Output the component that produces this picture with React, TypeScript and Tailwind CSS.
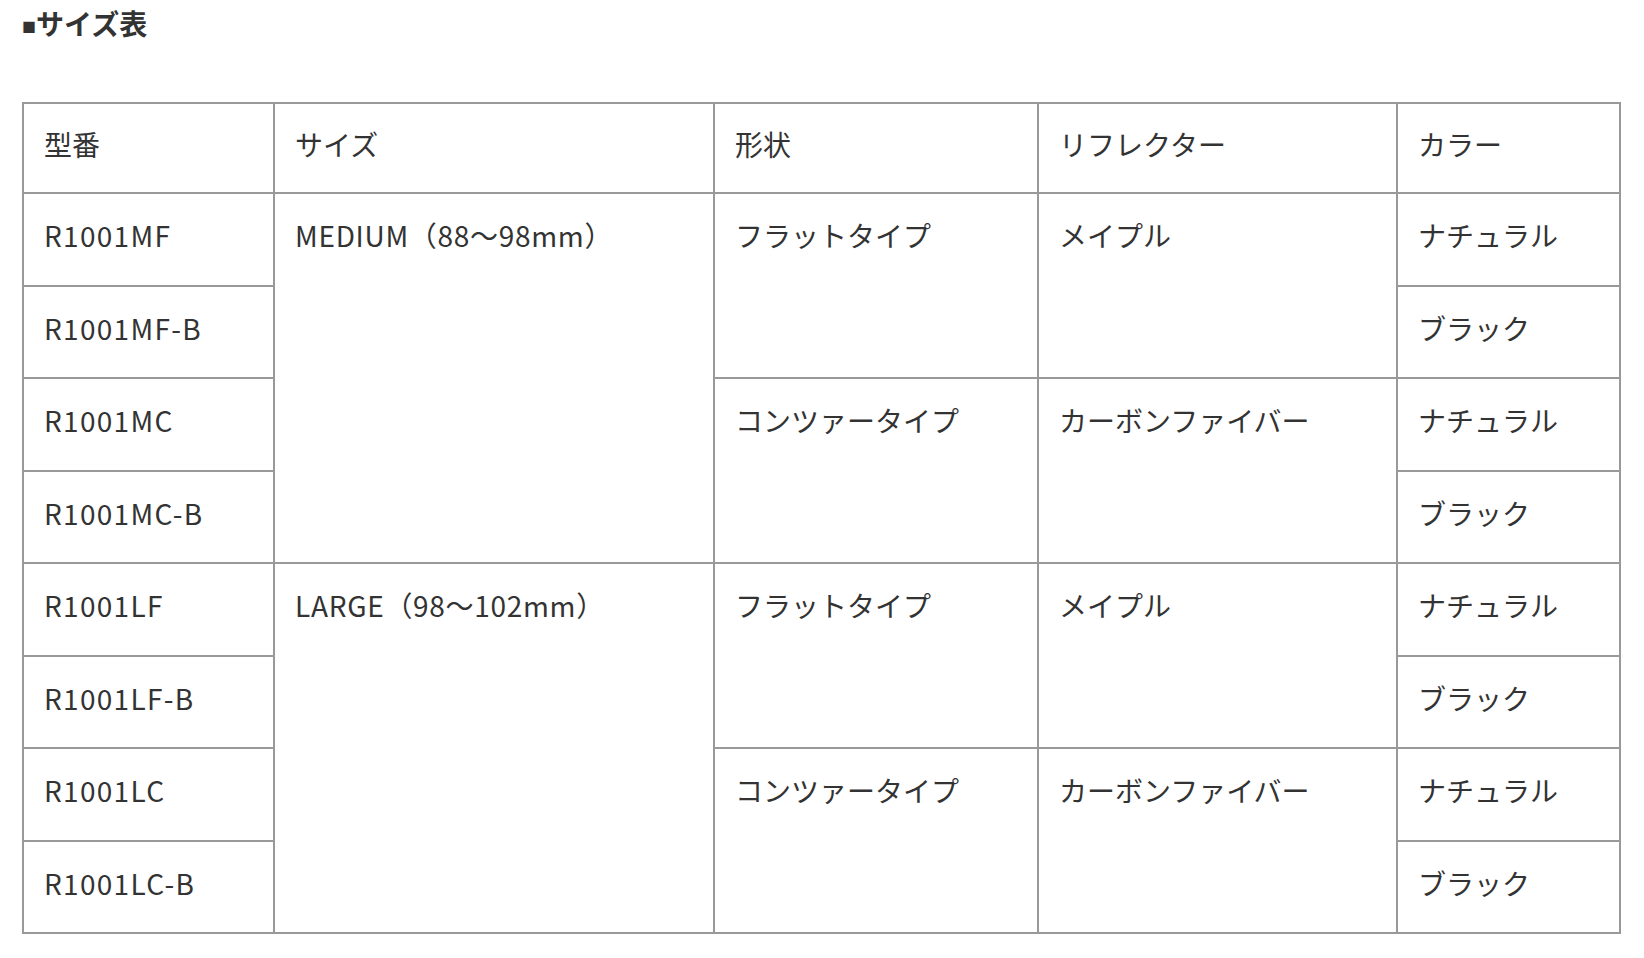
const rows = [
  { model: 'R1001MF', size: 'MEDIUM（88〜98mm）', shape: 'フラットタイプ', reflector: 'メイプル', color: 'ナチュラル' },
  { model: 'R1001MF-B', color: 'ブラック' },
  { model: 'R1001MC', shape: 'コンツァータイプ', reflector: 'カーボンファイバー', color: 'ナチュラル' },
  { model: 'R1001MC-B', color: 'ブラック' },
  { model: 'R1001LF', size: 'LARGE（98〜102mm）', shape: 'フラットタイプ', reflector: 'メイプル', color: 'ナチュラル' },
  { model: 'R1001LF-B', color: 'ブラック' },
  { model: 'R1001LC', shape: 'コンツァータイプ', reflector: 'カーボンファイバー', color: 'ナチュラル' },
  { model: 'R1001LC-B', color: 'ブラック' },
];

const base = 'border-2 border-[#999999] px-[20px] leading-[50px] align-top text-left font-normal';
const head = `${base} pt-[15px] pb-[23px]`;
const cell = `${base} pt-[16px] pb-[24.5px]`;

export default function App() {
  return (
    <main
      className="min-h-screen bg-white px-[22px] pt-[5px] text-[#333333]"
      style={{ fontFamily: '"Noto Sans CJK JP", "Noto Sans", sans-serif' }}
    >
      <h2 className="text-[28px] font-bold leading-[36px]">
        <span className="text-[14px] leading-[0] align-[3px]">■</span>サイズ表
      </h2>
      <table className="mt-[61px] w-[1597px] table-fixed border-collapse text-[28px]">
        <colgroup>
          <col className="w-[251px]" />
          <col className="w-[440px]" />
          <col className="w-[324px]" />
          <col className="w-[359px]" />
          <col className="w-[223px]" />
        </colgroup>
        <thead>
          <tr>
            <th className={head}>型番</th>
            <th className={head}>サイズ</th>
            <th className={head}>形状</th>
            <th className={head}>リフレクター</th>
            <th className={head}>カラー</th>
          </tr>
        </thead>
        <tbody>
          {rows.map((r) => (
            <tr key={r.model}>
              <td className={`${cell} tracking-[1.3px]`}>{r.model}</td>
              {r.size && <td className={`${cell} tracking-[0.7px]`} rowSpan={4}>{r.size}</td>}
              {r.shape && <td className={cell} rowSpan={2}>{r.shape}</td>}
              {r.reflector && <td className={cell} rowSpan={2}>{r.reflector}</td>}
              <td className={cell}>{r.color}</td>
            </tr>
          ))}
        </tbody>
      </table>
    </main>
  );
}
